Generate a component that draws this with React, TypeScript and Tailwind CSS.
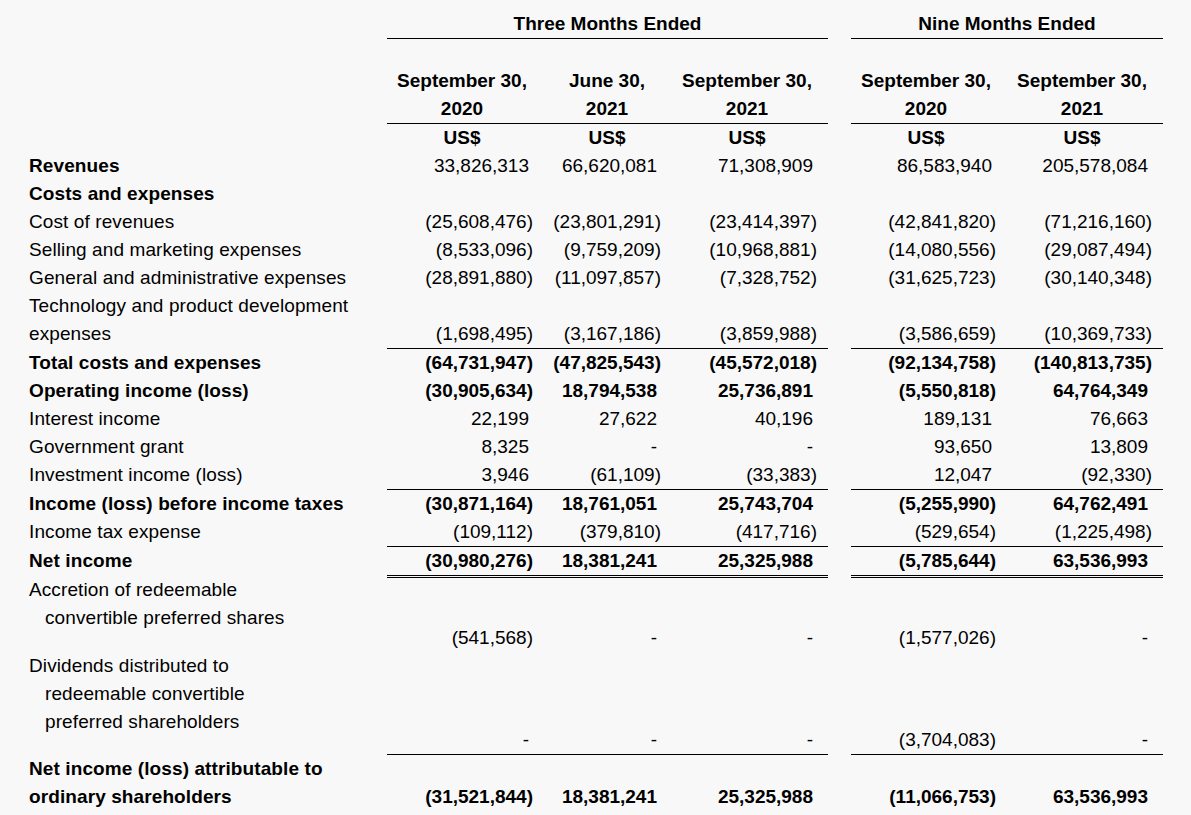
import React from "react";

type Row = {
  lines: { text: string; indent?: boolean }[];
  bold?: boolean;
  valsBold?: boolean;
  vals?: string[];
  pb?: boolean;
  lift?: boolean;
};

const PAD = [
  "pl-[4px] pr-[10px]",
  "pl-[10px] pr-[10px]",
  "pl-[6px] pr-[11px]",
  "pl-[5px] pr-[10px]",
  "pl-[6px] pr-[11px]",
];

const L = (text: string, indent = false) => ({ text, indent });

const rowsA: Row[] = [
  { lines: [L("Revenues")], bold: true, vals: ["33,826,313", "66,620,081", "71,308,909", "86,583,940", "205,578,084"] },
  { lines: [L("Costs and expenses")], bold: true },
  { lines: [L("Cost of revenues")], vals: ["(25,608,476)", "(23,801,291)", "(23,414,397)", "(42,841,820)", "(71,216,160)"] },
  { lines: [L("Selling and marketing expenses")], vals: ["(8,533,096)", "(9,759,209)", "(10,968,881)", "(14,080,556)", "(29,087,494)"] },
  { lines: [L("General and administrative expenses")], vals: ["(28,891,880)", "(11,097,857)", "(7,328,752)", "(31,625,723)", "(30,140,348)"] },
  { lines: [L("Technology and product development"), L("expenses")], vals: ["(1,698,495)", "(3,167,186)", "(3,859,988)", "(3,586,659)", "(10,369,733)"] },
];

const rowsB: Row[] = [
  { lines: [L("Total costs and expenses")], bold: true, valsBold: true, vals: ["(64,731,947)", "(47,825,543)", "(45,572,018)", "(92,134,758)", "(140,813,735)"] },
  { lines: [L("Operating income (loss)")], bold: true, valsBold: true, vals: ["(30,905,634)", "18,794,538", "25,736,891", "(5,550,818)", "64,764,349"] },
  { lines: [L("Interest income")], vals: ["22,199", "27,622", "40,196", "189,131", "76,663"] },
  { lines: [L("Government grant")], vals: ["8,325", "-", "-", "93,650", "13,809"] },
  { lines: [L("Investment income (loss)")], vals: ["3,946", "(61,109)", "(33,383)", "12,047", "(92,330)"] },
];

const rowsC: Row[] = [
  { lines: [L("Income (loss) before income taxes")], bold: true, valsBold: true, vals: ["(30,871,164)", "18,761,051", "25,743,704", "(5,255,990)", "64,762,491"] },
  { lines: [L("Income tax expense")], vals: ["(109,112)", "(379,810)", "(417,716)", "(529,654)", "(1,225,498)"] },
];

const rowsD: Row[] = [
  { lines: [L("Net income")], bold: true, valsBold: true, vals: ["(30,980,276)", "18,381,241", "25,325,988", "(5,785,644)", "63,536,993"] },
];

const rowsE: Row[] = [
  { lines: [L("Accretion of redeemable"), L("convertible preferred shares", true)], pb: true, lift: true, vals: ["(541,568)", "-", "-", "(1,577,026)", "-"] },
  { lines: [L("Dividends distributed to"), L("redeemable convertible", true), L("preferred shareholders", true)], pb: true, vals: ["-", "-", "-", "(3,704,083)", "-"] },
];

const rowsF: Row[] = [
  { lines: [L("Net income (loss) attributable to"), L("ordinary shareholders")], bold: true, valsBold: true, vals: ["(31,521,844)", "18,381,241", "25,325,988", "(11,066,753)", "63,536,993"] },
];

function Value({ v, col, bold }: { v?: string; col: number; bold?: boolean }) {
  const neg = v ? v.startsWith("(") : false;
  return (
    <div className={`flex items-end justify-end whitespace-nowrap ${PAD[col]} ${bold ? "font-bold" : ""}`}>
      {v ? <span className={neg ? "" : "pr-[4px]"}>{v}</span> : null}
    </div>
  );
}

function DataRow({ row }: { row: Row }) {
  const v = row.vals;
  const pb = row.pb ? (row.lift ? "pb-[20px]" : "pb-[18px]") : "";
  return (
    <>
      <div className={`pl-[29px] whitespace-nowrap tracking-[0.1px] ${row.bold ? "font-bold" : ""} ${pb}`}>
        <div className={row.lift ? "-mt-[2px]" : ""}>
          {row.lines.map((l, i) => (
            <div key={i} className={l.indent ? "pl-[16px]" : ""}>
              {l.text}
            </div>
          ))}
        </div>
      </div>
      <Value v={v?.[0]} col={0} bold={row.valsBold} />
      <Value v={v?.[1]} col={1} bold={row.valsBold} />
      <Value v={v?.[2]} col={2} bold={row.valsBold} />
      <div />
      <Value v={v?.[3]} col={3} bold={row.valsBold} />
      <Value v={v?.[4]} col={4} bold={row.valsBold} />
    </>
  );
}

function Rule({ double }: { double?: boolean }) {
  const cls = double ? "h-[3px] border-y border-black" : "h-px bg-black";
  return (
    <>
      <div />
      <div className={`col-span-3 ${cls}`} />
      <div />
      <div className={`col-span-2 ${cls}`} />
    </>
  );
}

function HeadCell({ col, lines }: { col: number; lines: string[] }) {
  return (
    <div className={`text-center font-bold whitespace-nowrap ${PAD[col]}`}>
      {lines.map((l, i) => (
        <div key={i}>{l}</div>
      ))}
    </div>
  );
}

export default function App() {
  const dates = [
    ["September 30,", "2020"],
    ["June 30,", "2021"],
    ["September 30,", "2021"],
    ["September 30,", "2020"],
    ["September 30,", "2021"],
  ];
  return (
    <div className="min-h-[815px] w-full bg-[#f8f8f8] pt-[10px] font-['Liberation_Sans',Arial,sans-serif] text-[19px] leading-[28px] text-black">
      <div className="grid w-[1163px] grid-cols-[387px_156px_128px_157px_23px_155px_157px]">
        <div />
        <div className="col-span-3 text-center font-bold">Three Months Ended</div>
        <div />
        <div className="col-span-2 text-center font-bold">Nine Months Ended</div>
        <Rule />
        <div className="col-span-7 h-[28px]" />
        <div />
        <HeadCell col={0} lines={dates[0]} />
        <HeadCell col={1} lines={dates[1]} />
        <HeadCell col={2} lines={dates[2]} />
        <div />
        <HeadCell col={3} lines={dates[3]} />
        <HeadCell col={4} lines={dates[4]} />
        <Rule />
        <div />
        <HeadCell col={0} lines={["US$"]} />
        <HeadCell col={1} lines={["US$"]} />
        <HeadCell col={2} lines={["US$"]} />
        <div />
        <HeadCell col={3} lines={["US$"]} />
        <HeadCell col={4} lines={["US$"]} />

        {rowsA.map((r, i) => (
          <DataRow key={"a" + i} row={r} />
        ))}
        <Rule />
        {rowsB.map((r, i) => (
          <DataRow key={"b" + i} row={r} />
        ))}
        <Rule />
        {rowsC.map((r, i) => (
          <DataRow key={"c" + i} row={r} />
        ))}
        <Rule />
        {rowsD.map((r, i) => (
          <DataRow key={"d" + i} row={r} />
        ))}
        <Rule double />
        {rowsE.map((r, i) => (
          <DataRow key={"e" + i} row={r} />
        ))}
        <Rule />
        {rowsF.map((r, i) => (
          <DataRow key={"f" + i} row={r} />
        ))}
      </div>
    </div>
  );
}
